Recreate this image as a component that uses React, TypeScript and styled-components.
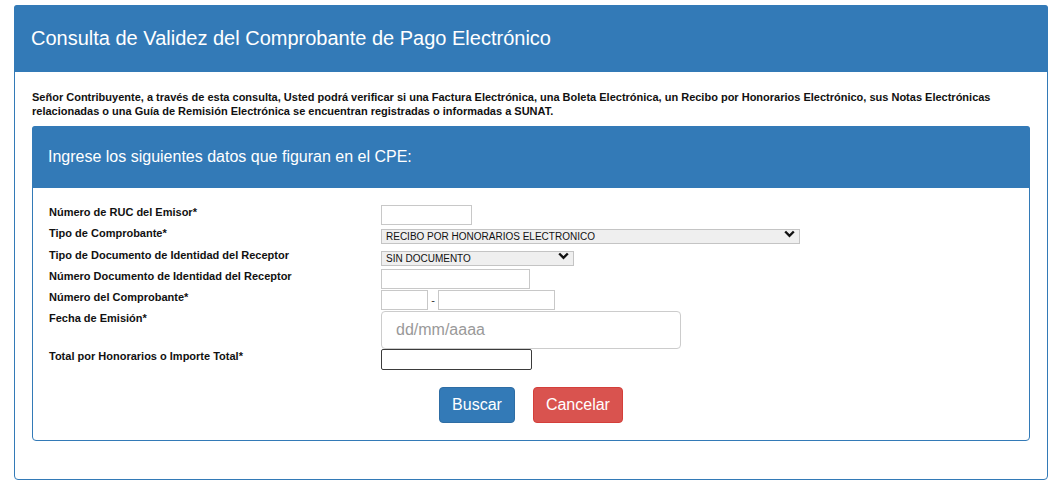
import React from 'react';
import styled, { createGlobalStyle } from 'styled-components';

const GlobalStyle = createGlobalStyle`
  body {
    margin: 0;
    background: #ffffff;
    font-family: "Liberation Sans", Arial, Helvetica, sans-serif;
    color: #333333;
  }
`;

const Page = styled.div`
  padding: 5px 15px 8px 14px;
`;

const Panel = styled.section`
  border: 1px solid #337ab7;
  border-radius: 4px;
  background: #ffffff;
`;

const PanelHeading = styled.div<{ $size: number; $height: number; $pad: number }>`
  background: #337ab7;
  color: #ffffff;
  height: ${(p) => p.$height}px;
  padding: 0 ${(p) => p.$pad}px;
  display: flex;
  align-items: center;
  font-size: ${(p) => p.$size}px;
  border-radius: 3px 3px 0 0;
  margin: -1px -1px 0;
`;

const OuterBody = styled.div`
  padding: 18px 17px 38px 17px;
`;

const Intro = styled.p`
  margin: 0 0 8px;
  font-size: 11px;
  font-weight: bold;
  line-height: 14px;
  color: #111111;
`;

const InnerBody = styled.div`
  padding: 17px 16px 17px 16px;
`;

const Form = styled.div`
  display: grid;
  grid-template-columns: 332px 1fr;
  align-items: start;
`;

const Label = styled.label`
  font-size: 11px;
  font-weight: bold;
  color: #111111;
  line-height: 13px;
  padding-top: 1px;
`;

const Field = styled.div<{ $h: number }>`
  height: ${(p) => p.$h}px;
  display: flex;
  align-items: flex-start;
`;

const TextInput = styled.input<{ $w: number; $dark?: boolean }>`
  box-sizing: border-box;
  width: ${(p) => p.$w}px;
  height: ${(p) => (p.$dark ? 21 : 20)}px;
  border: 1px solid ${(p) => (p.$dark ? '#3b3b3b' : '#c8c8c8')};
  border-radius: ${(p) => (p.$dark ? 2 : 0)}px;
  padding: 0 3px;
  font-family: inherit;
  font-size: 11px;
  background: #ffffff;
  outline: none;
`;

const Dash = styled.span`
  width: 10px;
  text-align: center;
  font-size: 11px;
  line-height: 20px;
  color: #333;
`;

const SelectWrap = styled.div<{ $w: number }>`
  position: relative;
  width: ${(p) => p.$w}px;
  height: 15px;
`;

const Select = styled.select`
  appearance: none;
  box-sizing: border-box;
  width: 100%;
  height: 100%;
  border: 1px solid #c4c4c4;
  background: #efefef;
  padding: 0 0 0 4px;
  font-family: "Liberation Sans", Arial, sans-serif;
  font-size: 10px;
  color: #111111;
  outline: none;
`;

const Chevron = styled.svg`
  position: absolute;
  right: 5px;
  top: 4px;
  pointer-events: none;
`;

const DateInput = styled.input`
  box-sizing: border-box;
  width: 300px;
  height: 38px;
  border: 1px solid #cccccc;
  border-radius: 4px;
  padding: 0 14px;
  font-family: inherit;
  font-size: 16px;
  color: #555;
  outline: none;
  &::placeholder {
    color: #999999;
  }
`;

const Actions = styled.div`
  display: flex;
  justify-content: center;
  gap: 18px;
  margin-top: 17px;
`;

const Button = styled.button<{ $variant: 'primary' | 'danger' }>`
  height: 36px;
  padding: 0 12px;
  font-family: inherit;
  font-size: 16px;
  color: #ffffff;
  border-radius: 4px;
  cursor: pointer;
  background: ${(p) => (p.$variant === 'primary' ? '#337ab7' : '#d9534f')};
  border: 1px solid ${(p) => (p.$variant === 'primary' ? '#2e6da4' : '#d43f3a')};
`;

const Dropdown = ({ width, value }: { width: number; value: string }) => (
  <SelectWrap $w={width}>
    <Select defaultValue={value}>
      <option value={value}>{value}</option>
    </Select>
    <Chevron width="11" height="8" viewBox="0 0 11 8">
      <path d="M1.2 1.5 L5.5 5.8 L9.8 1.5" fill="none" stroke="#111" strokeWidth="2.4" />
    </Chevron>
  </SelectWrap>
);

const App = () => {
  return (
    <Page>
      <GlobalStyle />
      <Panel>
        <PanelHeading $size={20} $height={67} $pad={17}>
          Consulta de Validez del Comprobante de Pago Electrónico
        </PanelHeading>
        <OuterBody>
          <Intro>
            Señor Contribuyente, a través de esta consulta, Usted podrá verificar si una Factura Electrónica, una
            Boleta Electrónica, un Recibo por Honorarios Electrónico, sus Notas Electrónicas relacionadas o una Guía
            de Remisión Electrónica se encuentran registradas o informadas a SUNAT.
          </Intro>
          <Panel>
            <PanelHeading $size={16} $height={62} $pad={16}>
              Ingrese los siguientes datos que figuran en el CPE:
            </PanelHeading>
            <InnerBody>
              <Form>
                <Label>Número de RUC del Emisor*</Label>
                <Field $h={21}>
                  <TextInput $w={91} />
                </Field>

                <Label>Tipo de Comprobante*</Label>
                <Field $h={22}>
                  <Dropdown width={419} value="RECIBO POR HONORARIOS ELECTRONICO" />
                </Field>

                <Label>Tipo de Documento de Identidad del Receptor</Label>
                <Field $h={21}>
                  <Dropdown width={193} value="SIN DOCUMENTO" />
                </Field>

                <Label>Número Documento de Identidad del Receptor</Label>
                <Field $h={21}>
                  <TextInput $w={149} />
                </Field>

                <Label>Número del Comprobante*</Label>
                <Field $h={21}>
                  <TextInput $w={47} />
                  <Dash>-</Dash>
                  <TextInput $w={117} />
                </Field>

                <Label>Fecha de Emisión*</Label>
                <Field $h={38}>
                  <DateInput placeholder="dd/mm/aaaa" />
                </Field>

                <Label>Total por Honorarios o Importe Total*</Label>
                <Field $h={21}>
                  <TextInput $w={151} $dark />
                </Field>
              </Form>
              <Actions>
                <Button $variant="primary">Buscar</Button>
                <Button $variant="danger">Cancelar</Button>
              </Actions>
            </InnerBody>
          </Panel>
        </OuterBody>
      </Panel>
    </Page>
  );
};

export default App;
